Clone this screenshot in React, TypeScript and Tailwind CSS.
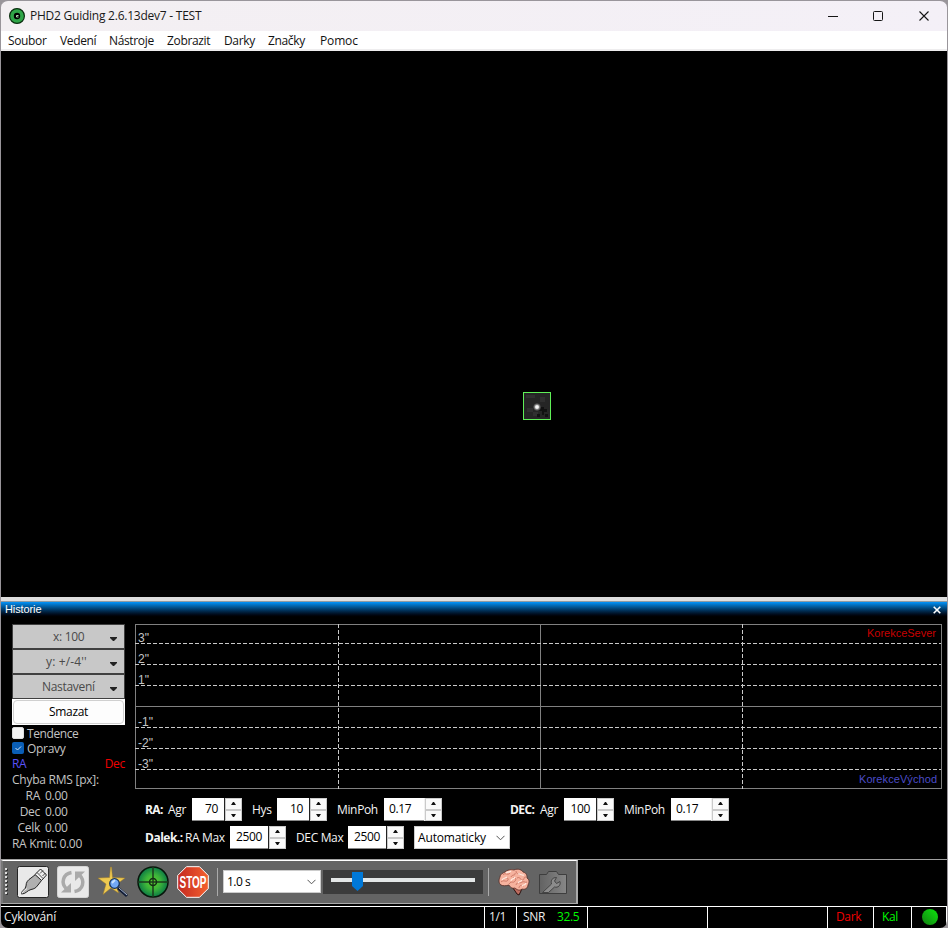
import React from "react";

const ui = "font-['Open_Sans','Noto_Sans',sans-serif]";

function Label({ children, className = "" }: { children: React.ReactNode; className?: string }) {
  return <span className={`shrink-0 whitespace-pre ${className}`}>{children}</span>;
}

function TitleBar() {
  return (
    <div className="flex h-[31px] shrink-0 items-center rounded-t-[7px] border-t border-[#99959b] bg-gradient-to-r from-[#f3eff2] to-[#f4f0f7]">
      <svg className="ml-2 shrink-0" width="16" height="16" viewBox="0 0 16 16">
        <circle cx="8" cy="8" r="7.4" fill="#2fa548" stroke="#092c0d" strokeWidth="1.2" />
        <circle cx="8" cy="8" r="3.2" fill="#000" />
        <path d="M9.500 7.500H7.500v1.500h2" stroke="#aee2b2" strokeWidth="1" fill="none" />
      </svg>
      <Label className="ml-[5px] text-[12px] tracking-[-0.24px] text-[#191919]">PHD2 Guiding 2.6.13dev7 - TEST</Label>
      <div className="flex-1" />
      <svg className="mr-4 shrink-0" width="104" height="14" viewBox="0 0 104 14" fill="none" stroke="#151515">
        <path d="M1 7.5h10" />
        <rect x="46.5" y="2.5" width="9" height="9" rx="1" />
        <path d="M92.5 2.5l9 9m0-9l-9 9" strokeWidth="1.1" />
      </svg>
    </div>
  );
}

function MenuBar() {
  return (
    <div className="flex h-5 shrink-0 items-center border-b-2 border-[#eeedee] bg-white pl-[7px] pt-[2px] text-[12px] tracking-[-0.35px] text-[#111]">
      <Label className="w-[52px]">Soubor</Label>
      <Label className="w-[49px]">Vedení</Label>
      <Label className="w-[58px]">Nástroje</Label>
      <Label className="w-[57px]">Zobrazit</Label>
      <Label className="w-11">Darky</Label>
      <Label className="w-[52px]">Značky</Label>
      <Label className="tracking-[-0.15px]">Pomoc</Label>
    </div>
  );
}

function GuideStar() {
  return (
    <div className="relative h-[546px] shrink-0 bg-black">
      <svg className="absolute left-[522px] top-[341px]" width="28" height="28" viewBox="0 0 28 28">
        <defs>
          <radialGradient id="star">
            <stop offset="0" stopColor="#fff" />
            <stop offset=".35" stopColor="#eee" />
            <stop offset=".65" stopColor="#777" />
            <stop offset="1" stopColor="#292929" />
          </radialGradient>
        </defs>
        <rect width="28" height="28" fill="#252525" />
        <path d="M3 3h9v3H3zM17 5h5v5h-5zM4 16h6v4H4zM10 20h5v4h-5z" fill="#303030" />
        <path d="M18 15h3v2h3v3h-3v3h-2v-4h-3v-2h2zM14 22h3v3h-3zM22 22h3v3h-3z" fill="#111" />
        <circle cx="14" cy="15" r="4" fill="url(#star)" />
        <rect x=".5" y=".5" width="27" height="27" fill="none" stroke="#5fef57" />
      </svg>
    </div>
  );
}

function DropButton({ text, pad }: { text: string; pad: string }) {
  return (
    <div className={`flex h-[25px] items-center border border-[#404040] bg-[#c8c8c8] text-[#4a4a4a] ${pad}`}>
      <Label>{text}</Label>
      <svg className="ml-auto mr-[7px] mt-1" width="7" height="4" viewBox="0 0 7 4">
        <path d="M0 0h7v1L4 4H3L0 1z" fill="#222" />
      </svg>
    </div>
  );
}

function SidePanel() {
  return (
    <div className="ml-[11px] mt-[6px] flex w-[113px] shrink-0 flex-col text-[12px] leading-[15px] tracking-[-0.3px] text-[#c4c4c4]">
      <DropButton text="x: 100" pad="pl-10" />
      <DropButton text={"y: +/-4''"} pad="pl-[33px] tracking-[0.15px]" />
      <DropButton text="Nastavení" pad="pl-[29px]" />
      <div className="flex h-[26px] bg-white p-px">
        <div className="flex flex-1 items-center justify-center rounded-[4px] border border-[#d0d0d0] bg-[#fdfdfd] pb-px text-black">Smazat</div>
      </div>
      <div className="mt-[1px] flex h-[15px] items-center">
        <span className="mr-[3px] mb-px h-3 w-3 rounded-[2px] border border-[#ddd] bg-[#f3f3f3]" />
        <Label className="tracking-[-0.4px]">Tendence</Label>
      </div>
      <div className="flex h-[15px] items-center">
        <svg className="mr-[3px] mb-px" width="12" height="12" viewBox="0 0 12 12">
          <rect width="12" height="12" rx="2" fill="#0a5eb6" />
          <path d="M3.5 6l2 2L9 4.5" fill="none" stroke="#d3e5f5" />
        </svg>
        <Label>Opravy</Label>
      </div>
      <div className="flex h-[15px] justify-between">
        <Label className="text-[#5a52f8]">RA</Label>
        <Label className="text-[#f00000]">Dec</Label>
      </div>
      <Label className="mt-[1px] h-4 tracking-[-0.25px]">Chyba RMS [px]:</Label>
      {[["RA", "0.00"], ["Dec", "0.00"], ["Celk", "0.00"]].map(([k, v]) => (
        <div className="flex h-4 gap-[5px]" key={k}>
          <Label className="w-7 text-right">{k}</Label>
          <Label>{v}</Label>
        </div>
      ))}
      <Label className="h-4">RA Kmit: 0.00</Label>
    </div>
  );
}

function Graph() {
  const levels: [number, string][] = [[19, '3"'], [40, '2"'], [61, '1"'], [103, '-1"'], [124, '-2"'], [145, '-3"']];
  return (
    <svg className="block shrink-0 font-['Liberation_Sans',Arial,sans-serif]" width="807" height="165" viewBox="0 0 807 165" shapeRendering="crispEdges">
      <rect x=".5" y=".5" width="806" height="164" fill="#000" stroke="#808080" />
      <path d="M0 82.5h807M405.5 0v165" stroke="#808080" />
      {levels.map(([y, t]) => (
        <g key={t}>
          <path d={`M0 ${y + 0.5}h806`} stroke="#cacaca" strokeDasharray="4 2" />
          <text x="3" y={y - 1} fontSize="12" fill="#c4c4c4">{t}</text>
        </g>
      ))}
      <path d="M203.5 0v165M607.5 0v165" stroke="#cacaca" strokeDasharray="4 2" />
      <text x="732" y="13" fontSize="11" textLength="69" fill="#c80000">KorekceSever</text>
      <text x="724" y="159" fontSize="11" textLength="78" fill="#4c4cc8">KorekceVýchod</text>
    </svg>
  );
}

function Spin({ value, width, wide = false }: { value: string; width: string; wide?: boolean }) {
  return (
    <div className="flex h-[23px] shrink-0 bg-[#f0f0f0]">
      <div className={`flex items-center border-b border-[#888] bg-white text-black ${width} ${wide ? "justify-start pl-[5px]" : "justify-end pr-[6px]"}`}>{value}</div>
      <div className={`flex w-[18px] flex-col border-l ${wide ? "border-l-[#f0f0f0]" : "border-l-[#222]"}`}>
        {["M0 4h5L3 1H2z", "M0 1h5L3 4H2z"].map((d) => (
          <div key={d} className="flex flex-1 items-center justify-center border border-[#cacaca] bg-[#fafafa]">
            <svg width="5" height="5" viewBox="0 0 5 5"><path d={d} fill="#111" /></svg>
          </div>
        ))}
      </div>
    </div>
  );
}

function Chevron() {
  return <svg width="9" height="6" viewBox="0 0 9 6"><path d="M.5 .8l4 4 4-4" fill="none" stroke="#555" /></svg>;
}

function Controls() {
  return (
    <div className="pl-[10px] pt-[9px] text-[12px] tracking-[-0.35px] text-[#f4f4f4]">
      <div className="flex h-[23px] items-center">
        <Label className="w-[23px] font-bold tracking-[-0.6px]">RA:</Label>
        <Label className="w-6">Agr</Label>
        <Spin value="70" width="w-8" />
        <Label className="ml-[10px] w-[25px]">Hys</Label>
        <Spin value="10" width="w-8" />
        <Label className="ml-[10px] w-[47px]">MinPoh</Label>
        <Spin value="0.17" width="w-10" wide />
        <Label className="ml-[68px] w-[30px] font-bold tracking-[-0.6px]">DEC:</Label>
        <Label className="w-6">Agr</Label>
        <Spin value="100" width="w-8" />
        <Label className="ml-[10px] w-[47px]">MinPoh</Label>
        <Spin value="0.17" width="w-10" wide />
      </div>
      <div className="mt-[5px] flex h-[23px] items-center">
        <Label className="w-[40px] font-bold tracking-[-0.5px]">Dalek.:</Label>
        <Label className="w-[45px]">RA Max</Label>
        <Spin value="2500" width="w-[38px]" />
        <Label className="ml-[10px] w-[52px]">DEC Max</Label>
        <Spin value="2500" width="w-[38px]" />
        <div className="ml-[10px] flex h-[23px] w-24 items-center justify-between border border-[#ccc] bg-white pl-[3px] pr-1 text-black">
          <Label className="tracking-[-0.15px]">Automaticky</Label>
          <Chevron />
        </div>
      </div>
    </div>
  );
}

function History() {
  return (
    <div className="flex h-[263px] shrink-0 flex-col border-b border-[#a0a0a0] bg-black">
      <div className="h-1 shrink-0 bg-[#dedede]" />
      <div className="flex h-[17px] shrink-0 items-center justify-between border-t border-[#8e9aa2] bg-gradient-to-b from-[#0394fa] to-black pl-1 pr-[6px] font-['Liberation_Sans',Arial,sans-serif] text-[11px] tracking-[-0.1px] text-white">
        <span className="pb-[2px]">Historie</span>
        <svg width="8" height="8" viewBox="0 0 8 8"><path d="M.7 .7l6.6 6.6m0-6.6L.7 7.3" stroke="#fff" strokeWidth="1.6" /></svg>
      </div>
      <div className="flex min-h-0 flex-1">
        <SidePanel />
        <div className="ml-[10px] mt-[6px] flex flex-col">
          <Graph />
          <Controls />
        </div>
      </div>
    </div>
  );
}

function PlugIcon() {
  return (
    <svg width="32" height="32" viewBox="0 0 32 32">
      <rect x=".5" y=".5" width="31" height="31" rx="2" fill="#e9e9e9" stroke="#252525" />
      <path d="M4.500 28c0-4 4-4 4.500-8 0-4 2-6 5-8l4.500-3.500 6 6-3.500 4.500c-2 3-4 4-7 4.500-4 1-5 4.500-9.500 4.500z" fill="#b0b0b0" stroke="#222" />
      <path d="M5 27.500c1-3 4-4 5-5" fill="none" stroke="#f0f0f0" />
      <path d="M18 8.500l5.500-5.500 6 6-5 5.500z" fill="#eee" stroke="#222" />
      <path d="M20 6.500l6 6M23 7.500l3-3M25.500 10l3-3" stroke="#222" strokeWidth=".8" />
    </svg>
  );
}

function LoopIcon() {
  return (
    <svg width="32" height="32" viewBox="0 0 32 32">
      <rect x=".5" y=".5" width="31" height="31" rx="2" fill="#e9e9e9" stroke="#d4d4d4" />
      <path d="M14.500 6.500C6 8 3.500 17 9.500 23" fill="none" stroke="#aaa" strokeWidth="3.500" />
      <path d="M4 26.500h10V17z" fill="#aaa" />
      <path d="M17.500 25.500C26 24 28.500 15 22.500 9" fill="none" stroke="#aaa" strokeWidth="3.500" />
      <path d="M28 5.500H18V15z" fill="#aaa" />
    </svg>
  );
}

function StarIcon() {
  return (
    <svg width="32" height="32" viewBox="0 0 32 32">
      <path d="M14.500 1l1 10.500 12.500.5-9 7 2.500 8-7.500-5-8 6.500 3-10.500L1 12l11.500-.5 1-10.500z" fill="#eec950" stroke="#9d7a2b" strokeWidth=".5" />
      <path d="M21 22l9 8" stroke="#101b35" strokeWidth="3" />
      <path d="M22 22l8 7" stroke="#a8b8d0" strokeWidth="1" />
      <circle cx="17.500" cy="17.500" r="4.800" fill="#72a9f5" stroke="#17345c" strokeWidth="1.300" />
      <path d="M15 17l3-3" stroke="#c9e3ff" strokeWidth="1.800" />
    </svg>
  );
}

function TargetIcon() {
  return (
    <svg width="32" height="32" viewBox="0 0 32 32">
      <defs>
        <radialGradient id="target"><stop stopColor="#5fd02c" /><stop offset=".5" stopColor="#3cb43a" /><stop offset="1" stopColor="#0c7a45" /></radialGradient>
      </defs>
      <circle cx="16" cy="16" r="15" fill="url(#target)" stroke="#07170b" strokeWidth="1.500" />
      <path d="M1 16h30M16 1v30" stroke="#1d3a1c" strokeWidth="1.500" />
      <circle cx="16" cy="16" r="3.500" fill="none" stroke="#142d14" strokeWidth="1.500" />
    </svg>
  );
}

function StopIcon() {
  return (
    <svg className="overflow-visible" width="32" height="32" viewBox="0 0 32 32">
      <defs><linearGradient id="stop" x2="1" y2="0"><stop stopColor="#c42920" /><stop offset="1" stopColor="#f4602e" /></linearGradient></defs>
      <path d="M9.500 .7h13L31.300 9.500v13L22.500 31.300h-13L.7 22.500v-13z" fill="url(#stop)" stroke="#fff" strokeWidth="1" />
      <text x="2.500" y="22" textLength="27" lengthAdjust="spacingAndGlyphs" fontFamily="Liberation Sans, Arial, sans-serif" fontWeight="bold" fontSize="17" fill="#fff">STOP</text>
    </svg>
  );
}

function BrainIcon() {
  return (
    <svg width="32" height="28" viewBox="0 0 32 28">
      <path d="M17 18l-2 2 4 6 2 1 2-4 1-4z" fill="#bd6c5f" stroke="#28110f" />
      <path d="M3 17C0 15 1 11 2 9c0-3 3-4 5-5 2-2 6-3 9-2 4-2 8 0 9 2 4 1 4 4 4 6 3 2 2 5 1 7 0 3-3 5-6 4-2 2-5 1-7-1-3 1-5-1-6-3-3 1-6 1-8 0z" fill="#f6b29e" stroke="#542b24" strokeWidth=".8" />
      <path d="M3 14c3-3 5 1 7-2 1-3-3-2-5-1M5 7c2-3 5 1 7-2M13 9c1-3 5-1 4-4M18 3c0 4 4 2 6 4M11 16c3-4 4 0 6-3 2-2 0-4-2-3M19 10c4-2 3 3 6 2 2-1 0-3 3-3M18 17c1-4 4-1 6-3 3-1 3 1 5 0M21 20c0-3 3-3 5-2" fill="none" stroke="#c87462" strokeWidth=".9" />
      <path d="M4 12c2-3 3-1 5-3M8 5c2-2 3 0 5-2M13 13c0-3 3-1 4-4M20 6c3-1 3 2 6 1M20 15c1-2 3-1 4-3M24 18c2-2 3 0 4-3" fill="none" stroke="#ffe9df" strokeWidth="1.300" />
    </svg>
  );
}

function CameraIcon() {
  return (
    <svg width="28" height="23" viewBox="0 0 28 23">
      <defs><linearGradient id="camera" x2="1"><stop stopColor="#626262" /><stop offset="1" stopColor="#878787" /></linearGradient></defs>
      <path d="M.5 3.500h7l2-3h8l2 3h8v19H.5z" fill="url(#camera)" stroke="#3e3e3e" />
      <path d="M3.500 21.500l9-8.500c-1-4 1-6.500 5-6.500l-2 3.500 2 2.500 3.500-2c1 4-2 6.500-5.500 5.500l-6 5.500z" fill="#8c8c8c" stroke="#444" />
    </svg>
  );
}

function Toolbar() {
  return (
    <div className="flex h-[46px] shrink-0 bg-black">
      <div className="flex h-11 w-[577px] items-center border-x-2 border-y border-t-white border-r-[#aaa] border-b-[#aaa] border-l-[#777] bg-[#646464]">
        <svg className="ml-[2px] shrink-0" width="4" height="28" viewBox="0 0 4 28">
          {[0, 4, 8, 12, 16, 20, 24].map((y) => <g key={y}><path d={`M1 ${y + 1}h2v2H1z`} fill="#333" /><path d={`M0 ${y}h2v2H0z`} fill="#ddd" /></g>)}
        </svg>
        <div className="ml-2 flex shrink-0 gap-2">
          <PlugIcon />
          <LoopIcon />
          <StarIcon />
          <TargetIcon />
          <StopIcon />
        </div>
        <div className="ml-2 h-7 w-px bg-[#aaa]" />
        <div className="ml-[5px] mb-px flex h-[23px] w-[98px] shrink-0 items-center justify-between border border-[#ccc] bg-white pl-[3px] pr-1 text-[12px] tracking-[-0.5px] text-black">
          <span>1.0 s</span>
          <Chevron />
        </div>
        <svg className="ml-[2px] shrink-0" width="160" height="24" viewBox="0 0 160 24">
          <rect width="160" height="24" fill="#3c3c3c" />
          <rect x="8" y="8" width="144" height="4" fill="#e4e7e7" />
          <path d="M29 2h11v14l-5.500 5L29 16z" fill="#0078d7" />
        </svg>
        <div className="ml-[5px] h-7 w-px bg-[#aaa]" />
        <div className="ml-[9px]"><BrainIcon /></div>
        <div className="ml-[9px]"><CameraIcon /></div>
      </div>
    </div>
  );
}

function StatusBar() {
  const cell = "flex shrink-0 items-center border-r border-white pb-px";
  return (
    <div className="flex h-[22px] shrink-0 border-t border-white bg-black text-[12px] tracking-[-0.35px] text-[#eee]">
      <div className={`${cell} w-[484px] pl-[3px] tracking-[-0.1px]`}>Cyklování</div>
      <div className={`${cell} w-8 pl-1`}>1/1</div>
      <div className={`${cell} w-[71px] pl-[6px]`}><Label className="w-[34px]">SNR</Label><Label className="text-[#00fa00]">32.5</Label></div>
      <div className={`${cell} w-[120px]`} />
      <div className={`${cell} w-[120px]`} />
      <div className={`${cell} w-[46px] pl-2 text-[#f00000]`}>Dark</div>
      <div className={`${cell} w-[38px] pl-2 text-[#00fa00]`}>Kal</div>
      <div className={`${cell} w-[35px] pl-[10px]`}><span className="h-4 w-4 rounded-full bg-gradient-to-tr from-[#108010] to-[#09e809]" /></div>
    </div>
  );
}

export default function App() {
  return (
    <div className={`h-[928px] w-[948px] overflow-hidden bg-[#99959a] pl-px pr-px ${ui}`}>
      <div className="flex h-full w-[946px] flex-col overflow-hidden rounded-b-[7px]">
        <TitleBar />
        <MenuBar />
        <GuideStar />
        <History />
        <Toolbar />
        <StatusBar />
      </div>
    </div>
  );
}
